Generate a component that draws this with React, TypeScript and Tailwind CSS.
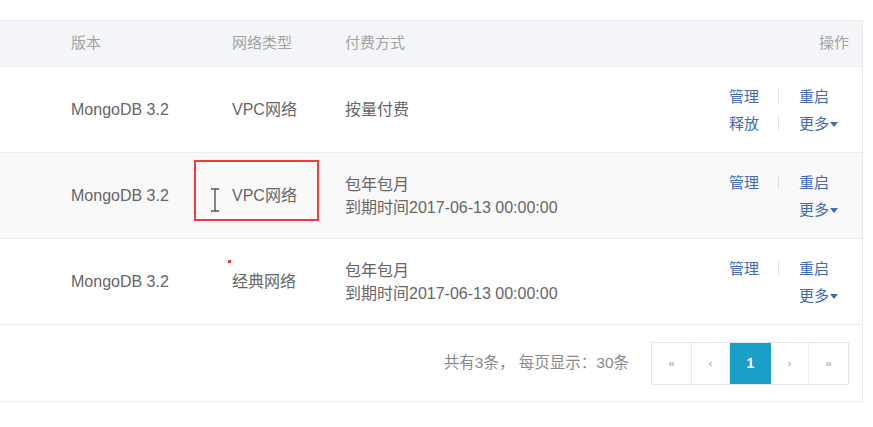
import type { ReactNode } from "react"

type Row = {
    version: string
    network: string
    pay: string
    expire?: string
    release?: boolean
    bg: string
}

const rows: Row[] = [
    { version: "MongoDB 3.2", network: "VPC网络", pay: "按量付费", release: true, bg: "bg-white" },
    { version: "MongoDB 3.2", network: "VPC网络", pay: "包年包月", expire: "到期时间2017-06-13 00:00:00", bg: "bg-[#f9f9f9]" },
    { version: "MongoDB 3.2", network: "经典网络", pay: "包年包月", expire: "到期时间2017-06-13 00:00:00", bg: "bg-white" },
]

function Link({ children }: { children: ReactNode }) {
    return <span className="text-[#3f6cb3] cursor-pointer leading-[27px]">{children}</span>
}

function Sep() {
    return <span className="mx-auto block h-[14px] w-px bg-[#e2e2e2]" />
}

function Caret() {
    return (
        <svg width="8" height="5" viewBox="0 0 8 5" className="ml-[1px] inline-block align-middle">
            <path d="M0 0h8L4 5z" fill="#3f6cb3" />
        </svg>
    )
}

function Actions({ release }: { release?: boolean }) {
    return (
        <div className="grid grid-cols-[30px_40px_auto] items-center pr-[24px] text-[15px]">
            <Link>管理</Link>
            <Sep />
            <Link>重启</Link>
            {release ? <Link>释放</Link> : <span />}
            {release ? <Sep /> : <span />}
            <Link>
                更多
                <Caret />
            </Link>
        </div>
    )
}

export default function App() {
    return (
        <div
            className="relative h-[427px] w-[873px] overflow-hidden bg-white pt-[20px] text-[16px] text-[#666]"
            style={{ fontFamily: '"Liberation Sans", "Noto Sans CJK SC", sans-serif' }}
        >
            <div className="w-[863px] border-r border-b border-[#ebebeb]">
                {/* 表头 */}
                <div className="grid h-[47px] grid-cols-[232px_113px_1fr_auto] items-center border-t border-b border-[#ededed] bg-[#f4f5f8] text-[15px] text-[#a3a3a3]">
                    <span className="pl-[71px]">版本</span>
                    <span>网络类型</span>
                    <span>付费方式</span>
                    <span className="pr-[13px]">操作</span>
                </div>

                {rows.map((r, i) => (
                    <div
                        key={i}
                        className={`grid h-[86px] grid-cols-[232px_113px_1fr_auto] items-center border-b border-[#ececec] ${r.bg}`}
                    >
                        <span className="pl-[71px]">{r.version}</span>
                        <span>{r.network}</span>
                        <div className="flex flex-col leading-[23px]">
                            <span>{r.pay}</span>
                            {r.expire && <span>{r.expire}</span>}
                        </div>
                        <Actions release={r.release} />
                    </div>
                ))}

                {/* 分页 */}
                <div className="flex h-[76px] items-center justify-end gap-[22px] pr-[13px]">
                    <span className="text-[15.5px] text-[#8a8a8a]">共有3条， 每页显示：30条</span>
                    <div className="flex h-[43px] border border-[#e6e6e6] text-[11px] text-[#999]">
                        <span className="flex w-[40px] items-center justify-center border-r border-[#ececec]">«</span>
                        <span className="flex w-[38px] items-center justify-center border-r border-[#ececec]">‹</span>
                        <span className="flex w-[41px] items-center justify-center bg-[#1a9fc8] text-[14px] font-bold text-white">1</span>
                        <span className="flex w-[38px] items-center justify-center border-r border-[#ececec]">›</span>
                        <span className="flex w-[39px] items-center justify-center">»</span>
                    </div>
                </div>
            </div>

            {/* 标注框与光标 */}
            <div className="absolute left-[194px] top-[160px] h-[61px] w-[125px] border-2 border-[#f23b3b]" />
            <svg className="absolute left-[209px] top-[188px]" width="12" height="24" viewBox="0 0 12 24">
                <path d="M2 1h8M6 1v22M2 23h8" stroke="#555" strokeWidth="1.4" fill="none" />
            </svg>
            <div className="absolute left-[228px] top-[260px] h-[3px] w-[3px] bg-[#f23b3b]" />
        </div>
    )
}
